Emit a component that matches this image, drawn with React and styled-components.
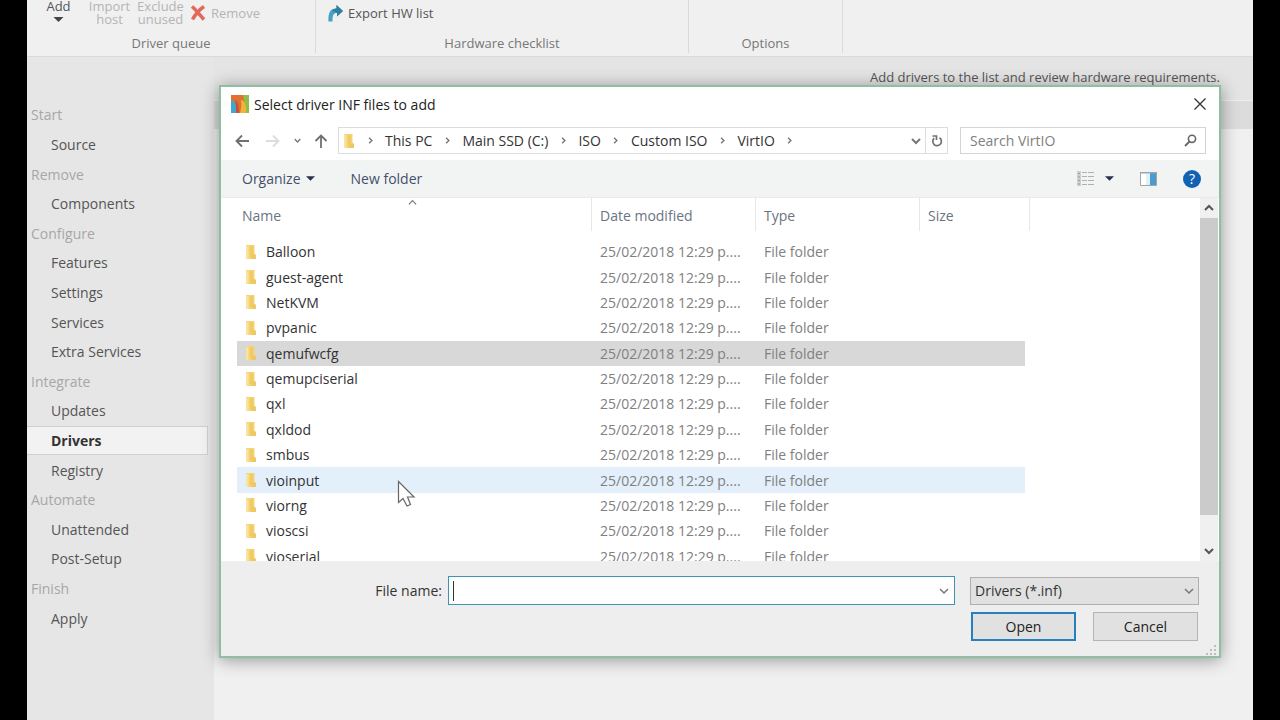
import React, { useState } from "react";
import styled, { createGlobalStyle, css } from "styled-components";

const GlobalStyle = createGlobalStyle`
  * {
    box-sizing: border-box;
  }

  body {
    margin: 0;
    background: #000;
    font-family: "Open Sans", "Noto Sans", sans-serif;
    font-size: 14px;
    color: #444;
  }

  button,
  input,
  select {
    font: inherit;
    color: inherit;
  }
`;

const Window = styled.div`
  position: relative;
  display: flex;
  flex-direction: column;
  min-height: 100vh;
  margin: 0 27px;
  background: #f0f0f0;
  overflow: hidden;
`;

const PlainButton = styled.button`
  display: inline-flex;
  align-items: center;
  justify-content: center;
  padding: 0;
  border: none;
  background: transparent;
  white-space: nowrap;
`;

/* Ribbon */

const Ribbon = styled.header`
  display: flex;
  height: 57px;
  padding-bottom: 3px;
  border-bottom: 1px solid #dadada;
`;

const RibbonGroup = styled.section`
  display: flex;
  flex-direction: column;
  width: ${props => props.$width}px;
  border-right: 1px solid #dadada;
`;

const RibbonTools = styled.div`
  display: flex;
  flex: none;
  align-items: center;
  height: 26px;
  padding-left: ${props => props.$indent}px;
`;

const RibbonLabel = styled.div`
  line-height: 34px;
  font-size: 13px;
  text-align: center;
  color: #777;
`;

const RibbonButton = styled(PlainButton)`
  gap: 5px;
  height: 26px;
  font-size: 13px;
  line-height: 13px;
  color: ${props => (props.disabled ? "#b4b4b4" : "#555")};
`;

const RemoveButton = styled(RibbonButton)`
  margin-left: 4px;
`;

const StackedButton = styled(RibbonButton)`
  flex-direction: column;
  gap: 0;
  width: 51px;
  white-space: normal;
`;

const ArrowSlot = styled.span`
  display: flex;
  align-items: center;
  height: 13px;
`;

/* Page body */

const Body = styled.div`
  display: flex;
  flex: 1;
`;

const Sidebar = styled.aside`
  width: 187px;
  padding-top: 43px;
  background: #e6e6e6;
`;

const NavList = styled.nav`
  display: grid;
  grid-auto-rows: 1fr;
  width: 181px;
  height: 533px;
`;

const NavHeading = styled.div`
  display: flex;
  align-items: center;
  padding-left: 4px;
  color: #a6a6a6;
`;

const NavLink = styled.a`
  display: flex;
  align-items: center;
  padding-left: 24px;
  border: 1px solid transparent;
  border-left: none;
  text-decoration: none;
  color: #555;

  ${props =>
    props.$active &&
    css`
      border-color: #d0d0d0;
      background: #f2f2f2;
      font-weight: 700;
      color: #333;
    `}
`;

const Main = styled.main`
  flex: 1;
`;

const Description = styled.div`
  height: 44px;
  padding-right: 33px;
  border-bottom: 1px solid #efefef;
  background: #e4e4e4;
  font-size: 13px;
  line-height: 40px;
  text-align: right;
  color: #555;
`;

const ListHeader = styled.div`
  height: 28px;
  background: #dcdcdc;
`;

/* Dialog */

const Dialog = styled.div`
  position: absolute;
  top: 85px;
  left: 192px;
  right: 32px;
  border: 2px solid #8fbea2;
  background: #fff;
  box-shadow: 0 2px 16px rgba(0, 0, 0, 0.38);
`;

const TitleBar = styled.div`
  display: flex;
  align-items: center;
  gap: 5px;
  height: 34px;
  padding: 0 13px 0 10px;
`;

const Title = styled.h1`
  flex: 1;
  margin: 0;
  font-size: 14px;
  font-weight: 400;
  color: #222;
`;

const NavBar = styled.div`
  display: flex;
  align-items: center;
  gap: 3px;
  height: 39px;
  padding: 0 13px 0 7px;
`;

const NavButton = styled(PlainButton)`
  width: ${props => (props.$narrow ? 14 : 28)}px;
  height: 26px;
`;

const AddressBar = styled.div`
  display: flex;
  flex: 1;
  align-items: center;
  height: 27px;
  margin-right: 9px;
  padding-left: 4px;
  border: 1px solid #dcdcdc;
`;

const Crumbs = styled.div`
  display: flex;
  flex: 1;
  align-items: center;
`;

const Crumb = styled(PlainButton)`
  line-height: 18px;
  color: #333;
`;

const CrumbArrow = styled(PlainButton)`
  width: 30px;
  height: 25px;
`;

const HistoryButton = styled(PlainButton)`
  width: 18px;
  height: 25px;
`;

const RefreshButton = styled(PlainButton)`
  width: 22px;
  height: 25px;
  border-left: 1px solid #dcdcdc;
`;

const SearchBox = styled.label`
  display: flex;
  align-items: center;
  width: 246px;
  height: 27px;
  padding: 0 8px 0 9px;
  border: 1px solid #d4d4d4;
`;

const BareInput = styled.input`
  flex: 1;
  min-width: 0;
  height: 20px;
  padding: 0;
  border: none;
  outline: none;
  background: transparent;
  color: #222;

  &::placeholder {
    color: #808080;
    opacity: 1;
  }
`;

const Toolbar = styled.div`
  display: flex;
  align-items: center;
  height: 38px;
  padding: 0 18px 0 21px;
  border-bottom: 1px solid #e8eaeb;
  background: #f2f4f4;
`;

const ToolbarButton = styled(PlainButton)`
  gap: 5px;
  margin-right: ${props => props.$space || 0}px;
  color: #44506a;
`;

const Spacer = styled.div`
  flex: 1;
`;

const FilePane = styled.div`
  display: flex;
  justify-content: space-between;
  height: 363px;
  padding-left: 16px;
  overflow: hidden;
`;

const FileTable = styled.table`
  width: 793px;
  height: 371px;
  border-collapse: collapse;
  table-layout: fixed;
`;

const HeadCell = styled.th`
  width: ${props => props.$width}px;
  height: 41px;
  padding: 0;
  font-weight: 400;
  text-align: left;
  vertical-align: top;
`;

const HeadLabel = styled.div`
  position: relative;
  height: 33px;
  padding-left: ${props => (props.$first ? 5 : 8)}px;
  border-right: 1px solid #e6e6e6;
  line-height: 35px;
  color: #6a7480;
`;

const SortMark = styled.span`
  position: absolute;
  top: 0;
  left: 0;
  right: 4px;
  display: flex;
  justify-content: center;
`;

const Cell = styled.td`
  padding: 0 8px;
  overflow: hidden;
  white-space: nowrap;
  color: #808080;
`;

const NameCell = styled(Cell)`
  color: #333;
`;

const SizeCell = styled(Cell)`
  padding: 0 5px 0 0;
  background-clip: content-box;
`;

const CellFill = styled.div`
  height: 25px;
`;

const FileName = styled.span`
  display: flex;
  align-items: center;
  gap: 9px;
`;

const rowColors = {
  selected: "#d8d8d8",
  hover: "#e3effa"
};

const Row = styled.tr`
  td {
    background-color: ${props => rowColors[props.$state] || "transparent"};
  }
`;

const ScrollBar = styled.div`
  display: flex;
  flex-direction: column;
  width: 18px;
  margin-right: 1px;
  background: #f0f0f0;
`;

const ScrollButton = styled(PlainButton)`
  height: 20px;
`;

const ScrollTrack = styled.div`
  flex: 1;
`;

const ScrollThumb = styled.div`
  height: 92%;
  background: #cbcbcb;
`;

const Footer = styled.div`
  display: flex;
  flex-direction: column;
  gap: 7px;
  padding: 15px 20px;
  background: #eee;
`;

const FooterRow = styled.div`
  display: flex;
  align-items: center;
  height: 29px;
`;

const ButtonRow = styled(FooterRow)`
  justify-content: flex-end;
  gap: 17px;
  padding-right: 1px;
`;

const FieldLabel = styled.label`
  width: 207px;
  padding-right: 6px;
  text-align: right;
  color: #333;
`;

const FileNameBox = styled.div`
  display: flex;
  flex: 1;
  align-items: center;
  height: 29px;
  margin-right: 15px;
  padding: 0 5px 0 4px;
  border: 1px solid #3d93b4;
  background: #fff;
`;

const Caret = styled.span`
  width: 1px;
  height: 20px;
  background: #333;
`;

const SelectBox = styled.div`
  position: relative;
  width: 229px;
`;

const Select = styled.select`
  width: 100%;
  height: 28px;
  padding: 0 24px 0 4px;
  border: 1px solid #b0b0b0;
  border-radius: 0;
  background: #e1e1e1;
  color: #333;
  appearance: none;
`;

const SelectArrow = styled.span`
  position: absolute;
  top: 0;
  right: 5px;
  display: flex;
  align-items: center;
  height: 100%;
  pointer-events: none;
`;

const DialogButton = styled(PlainButton)`
  width: 105px;
  height: 29px;
  border: ${props => (props.$primary ? "2px solid #2580bd" : "1px solid #b4b4b4")};
  background: #e1e1e1;
  color: #222;
`;

const SizeGrip = styled.svg`
  position: absolute;
  right: 3px;
  bottom: 1px;
`;

const Pointer = styled.svg`
  position: absolute;
  top: 393px;
  left: 176px;
  pointer-events: none;
`;

/* Icons */

const Chevron = ({ dir = "down", size = 10, color = "#777", weight = 2 }) => {
  const paths = {
    down: "M1 3 L5 7 L9 3",
    up: "M1 7 L5 3 L9 7",
    right: "M3 1 L7 5 L3 9"
  };
  return (
    <svg width={size} height={size} viewBox="0 0 10 10" aria-hidden="true">
      <path d={paths[dir]} fill="none" stroke={color} strokeWidth={weight} />
    </svg>
  );
};

const DownTriangle = ({ color = "#26324d", width = 9 }) => (
  <svg width={width} height="5" viewBox="0 0 10 5" aria-hidden="true">
    <path d="M0 0h10l-5 5z" fill={color} />
  </svg>
);

const Arrow = ({ turn = 0, color = "#707070" }) => (
  <svg width="14" height="14" viewBox="0 0 14 14" aria-hidden="true">
    <path
      d="M14 7H1.5M7 1.5L1.5 7L7 12.5"
      fill="none"
      stroke={color}
      strokeWidth="1.8"
      transform={`rotate(${turn} 7 7)`}
    />
  </svg>
);

const FolderIcon = () => (
  <svg width="12" height="16" viewBox="0 0 12 16" aria-hidden="true">
    <path d="M1 1h8.500v8.500l1.500 1.500v4H1z" fill="#f4d477" />
    <path d="M1 2h2.500v13H1z" fill="#f9e3a0" />
    <path d="M5 2h3v11H5z" fill="#f0ca62" />
    <path d="M8 10l3 1v4H6z" fill="#edc865" />
  </svg>
);

const LogoIcon = () => (
  <svg width="18" height="18" viewBox="0 0 18 18" aria-hidden="true">
    <path d="M0 0h18v18H0z" fill="#e2702f" />
    <path d="M0 6c3-1 5 1 5 5v7H0z" fill="#3fa9cf" />
    <path d="M4 5c3 1 4 6 4 13H5c0-5 0-9-1-13z" fill="#c3533a" />
    <path d="M12 0h6v18h-3z" fill="#93bd4b" />
    <path d="M10 5c3 0 6 5 5 13H9c1-4 2-8 1-13z" fill="#efb53a" />
  </svg>
);

const RemoveIcon = () => (
  <svg width="16" height="16" viewBox="0 0 16 16" aria-hidden="true">
    <path
      d="M2 1.500C6 5 10 10 14 14.500M14 1.500C9 5 5 10 2.500 14.500"
      fill="none"
      stroke="#e2695c"
      strokeWidth="3.600"
    />
  </svg>
);

const ExportIcon = () => (
  <svg width="15" height="17" viewBox="0 0 15 17" aria-hidden="true">
    <path
      d="M0.500 16.500C0 8 2 3.500 8.500 3.500V0L15 6L9 11.500V8C5.500 8 4.500 10 4.500 16.500z"
      fill="#4a9fc4"
    />
    <path d="M4 5.500C5.500 4 7 3.500 8.500 3.500V0L15 6L9 11.500V8z" fill="#2f7f9f" />
  </svg>
);

const RefreshIcon = () => (
  <svg width="12" height="14" viewBox="0 0 12 14" aria-hidden="true">
    <path
      d="M8.500 3.800A4.300 4.300 0 1 1 3.200 4.200M1.500 2H5.500V6"
      fill="none"
      stroke="#707070"
      strokeWidth="1.700"
    />
  </svg>
);

const SearchIcon = () => (
  <svg width="13" height="13" viewBox="0 0 13 13" aria-hidden="true">
    <circle cx="8" cy="4.800" r="3.600" fill="none" stroke="#666" strokeWidth="1.600" />
    <path d="M5.500 7.500L1 12" stroke="#666" strokeWidth="1.800" />
  </svg>
);

const ViewIcon = () => (
  <svg width="17" height="15" viewBox="0 0 17 15" aria-hidden="true">
    <path d="M0 0h4v15H0z" fill="#cfcfcf" />
    <path
      d="M1 2.500h2M1 6h2M1 9.500h2M1 13h2"
      stroke="#999"
    />
    <path
      d="M5 1.500h5M11 1.500h6M5 5.500h5M11 5.500h6M5 9.500h5M11 9.500h6M5 13.500h5M11 13.500h6"
      stroke="#b0b0b0"
    />
  </svg>
);

const PreviewIcon = () => (
  <svg width="17" height="14" viewBox="0 0 17 14" aria-hidden="true">
    <path d="M0.500 0.500h16v13h-16z" fill="#fff" stroke="#a5a5a5" />
    <path d="M6 2h4v11H6z" fill="#dff1f8" />
    <path d="M10 1h6v12h-6z" fill="#4a9bd0" />
    <path d="M0 0h17v1.500H0z" fill="#98a5ae" />
  </svg>
);

const HelpBadge = styled.span`
  display: flex;
  align-items: center;
  justify-content: center;
  width: 18px;
  height: 18px;
  border-radius: 50%;
  background: #1262b3;
  line-height: 18px;
  color: #fff;
`;

const CloseIcon = () => (
  <svg width="12" height="12" viewBox="0 0 12 12" aria-hidden="true">
    <path d="M0.500 0.500L11.500 11.500M11.500 0.500L0.500 11.500" stroke="#333" strokeWidth="1.300" />
  </svg>
);

const sections = [
  { title: "Start", items: ["Source"] },
  { title: "Remove", items: ["Components"] },
  {
    title: "Configure",
    items: ["Features", "Settings", "Services", "Extra Services"]
  },
  { title: "Integrate", items: ["Updates", "Drivers", "Registry"] },
  { title: "Automate", items: ["Unattended", "Post-Setup"] },
  { title: "Finish", items: ["Apply"] }
];

const crumbs = ["This PC", "Main SSD (C:)", "ISO", "Custom ISO", "VirtIO"];

const folders = [
  "Balloon",
  "guest-agent",
  "NetKVM",
  "pvpanic",
  "qemufwcfg",
  "qemupciserial",
  "qxl",
  "qxldod",
  "smbus",
  "vioinput",
  "viorng",
  "vioscsi",
  "vioserial"
];

const rowStates = { qemufwcfg: "selected", vioinput: "hover" };

const DriverRibbon = () => (
  <Ribbon>
    <RibbonGroup $width={289}>
      <RibbonTools $indent={6}>
        <StackedButton>
          Add
          <ArrowSlot>
            <DownTriangle color="#444" width={11} />
          </ArrowSlot>
        </StackedButton>
        <StackedButton disabled>Import host</StackedButton>
        <StackedButton disabled>Exclude unused</StackedButton>
        <RemoveButton disabled>
          <RemoveIcon />
          Remove
        </RemoveButton>
      </RibbonTools>
      <RibbonLabel>Driver queue</RibbonLabel>
    </RibbonGroup>
    <RibbonGroup $width={373}>
      <RibbonTools $indent={12}>
        <RibbonButton>
          <ExportIcon />
          Export HW list
        </RibbonButton>
      </RibbonTools>
      <RibbonLabel>Hardware checklist</RibbonLabel>
    </RibbonGroup>
    <RibbonGroup $width={154}>
      <RibbonTools $indent={0} />
      <RibbonLabel>Options</RibbonLabel>
    </RibbonGroup>
  </Ribbon>
);

const FileList = () => (
  <FilePane>
    <FileTable>
      <thead>
        <tr>
          <HeadCell $width={355}>
            <HeadLabel $first>
              Name
              <SortMark>
                <Chevron dir="up" size={9} weight={1.3} />
              </SortMark>
            </HeadLabel>
          </HeadCell>
          <HeadCell $width={164}>
            <HeadLabel>Date modified</HeadLabel>
          </HeadCell>
          <HeadCell $width={164}>
            <HeadLabel>Type</HeadLabel>
          </HeadCell>
          <HeadCell $width={110}>
            <HeadLabel>Size</HeadLabel>
          </HeadCell>
        </tr>
      </thead>
      <tbody>
        {folders.map(name => (
          <Row key={name} $state={rowStates[name]}>
            <NameCell>
              <FileName>
                <FolderIcon />
                {name}
              </FileName>
            </NameCell>
            <Cell>25/02/2018 12:29 p....</Cell>
            <Cell>File folder</Cell>
            <SizeCell>
              <CellFill />
            </SizeCell>
          </Row>
        ))}
      </tbody>
    </FileTable>
    <ScrollBar>
      <ScrollButton aria-label="Scroll up">
        <Chevron dir="up" color="#555" />
      </ScrollButton>
      <ScrollTrack>
        <ScrollThumb />
      </ScrollTrack>
      <ScrollButton aria-label="Scroll down">
        <Chevron color="#555" />
      </ScrollButton>
    </ScrollBar>
  </FilePane>
);

const OpenDialog = () => {
  const [fileName, setFileName] = useState("");

  return (
    <Dialog role="dialog" aria-labelledby="dialog-title">
      <TitleBar>
        <LogoIcon />
        <Title id="dialog-title">Select driver INF files to add</Title>
        <PlainButton aria-label="Close">
          <CloseIcon />
        </PlainButton>
      </TitleBar>

      <NavBar>
        <NavButton aria-label="Back">
          <Arrow />
        </NavButton>
        <NavButton aria-label="Forward" disabled>
          <Arrow turn={180} color="#dcdcdc" />
        </NavButton>
        <NavButton aria-label="Recent locations" $narrow>
          <Chevron size={7} />
        </NavButton>
        <NavButton aria-label="Up">
          <Arrow turn={90} />
        </NavButton>
        <AddressBar>
          <FolderIcon />
          <Crumbs>
            <CrumbArrow aria-label="Locations">
              <Chevron dir="right" size={7} />
            </CrumbArrow>
            {crumbs.map(crumb => (
              <React.Fragment key={crumb}>
                <Crumb>{crumb}</Crumb>
                <CrumbArrow aria-label={`Folders in ${crumb}`}>
                  <Chevron dir="right" size={7} />
                </CrumbArrow>
              </React.Fragment>
            ))}
          </Crumbs>
          <HistoryButton aria-label="Previous locations">
            <Chevron />
          </HistoryButton>
          <RefreshButton aria-label="Refresh">
            <RefreshIcon />
          </RefreshButton>
        </AddressBar>
        <SearchBox>
          <BareInput
            type="text"
            placeholder="Search VirtIO"
            aria-label="Search VirtIO"
          />
          <SearchIcon />
        </SearchBox>
      </NavBar>

      <Toolbar>
        <ToolbarButton $space={36}>
          Organize <DownTriangle />
        </ToolbarButton>
        <ToolbarButton>New folder</ToolbarButton>
        <Spacer />
        <ToolbarButton aria-label="Change view" $space={11}>
          <ViewIcon />
        </ToolbarButton>
        <ToolbarButton aria-label="More view options" $space={26}>
          <DownTriangle />
        </ToolbarButton>
        <ToolbarButton aria-label="Preview pane" $space={26}>
          <PreviewIcon />
        </ToolbarButton>
        <ToolbarButton aria-label="Help">
          <HelpBadge>?</HelpBadge>
        </ToolbarButton>
      </Toolbar>

      <FileList />

      <Footer>
        <FooterRow>
          <FieldLabel htmlFor="file-name">File name:</FieldLabel>
          <FileNameBox>
            <Caret />
            <BareInput
              id="file-name"
              type="text"
              value={fileName}
              onChange={e => setFileName(e.target.value)}
            />
            <Chevron weight={1.5} />
          </FileNameBox>
          <SelectBox>
            <Select aria-label="File type">
              <option>Drivers (*.inf)</option>
            </Select>
            <SelectArrow>
              <Chevron weight={1.5} />
            </SelectArrow>
          </SelectBox>
        </FooterRow>
        <ButtonRow>
          <DialogButton $primary>Open</DialogButton>
          <DialogButton>Cancel</DialogButton>
        </ButtonRow>
      </Footer>

      <SizeGrip width="10" height="10" viewBox="0 0 10 10" aria-hidden="true">
        <path
          d="M8 0h2v2h-2zM4 4h2v2h-2zM8 4h2v2h-2zM0 8h2v2h-2zM4 8h2v2h-2zM8 8h2v2h-2z"
          fill="#bdbdbd"
        />
      </SizeGrip>
      <Pointer width="19" height="28" viewBox="0 0 19 28" aria-hidden="true">
        <path
          d="M1.500 1.500V22.500L6 18.500L10 26L13.500 24.500L10.500 17H17z"
          fill="#fff"
          stroke="#666"
          strokeWidth="1.200"
        />
      </Pointer>
    </Dialog>
  );
};

const App = () => (
  <>
    <GlobalStyle />
    <Window>
      <DriverRibbon />
      <Body>
        <Sidebar>
          <NavList>
            {sections.map(section => (
              <React.Fragment key={section.title}>
                <NavHeading>{section.title}</NavHeading>
                {section.items.map(item => (
                  <NavLink key={item} href="#" $active={item === "Drivers"}>
                    {item}
                  </NavLink>
                ))}
              </React.Fragment>
            ))}
          </NavList>
        </Sidebar>
        <Main>
          <Description>
            Add drivers to the list and review hardware requirements.
          </Description>
          <ListHeader />
        </Main>
      </Body>
      <OpenDialog />
    </Window>
  </>
);

export default App;
